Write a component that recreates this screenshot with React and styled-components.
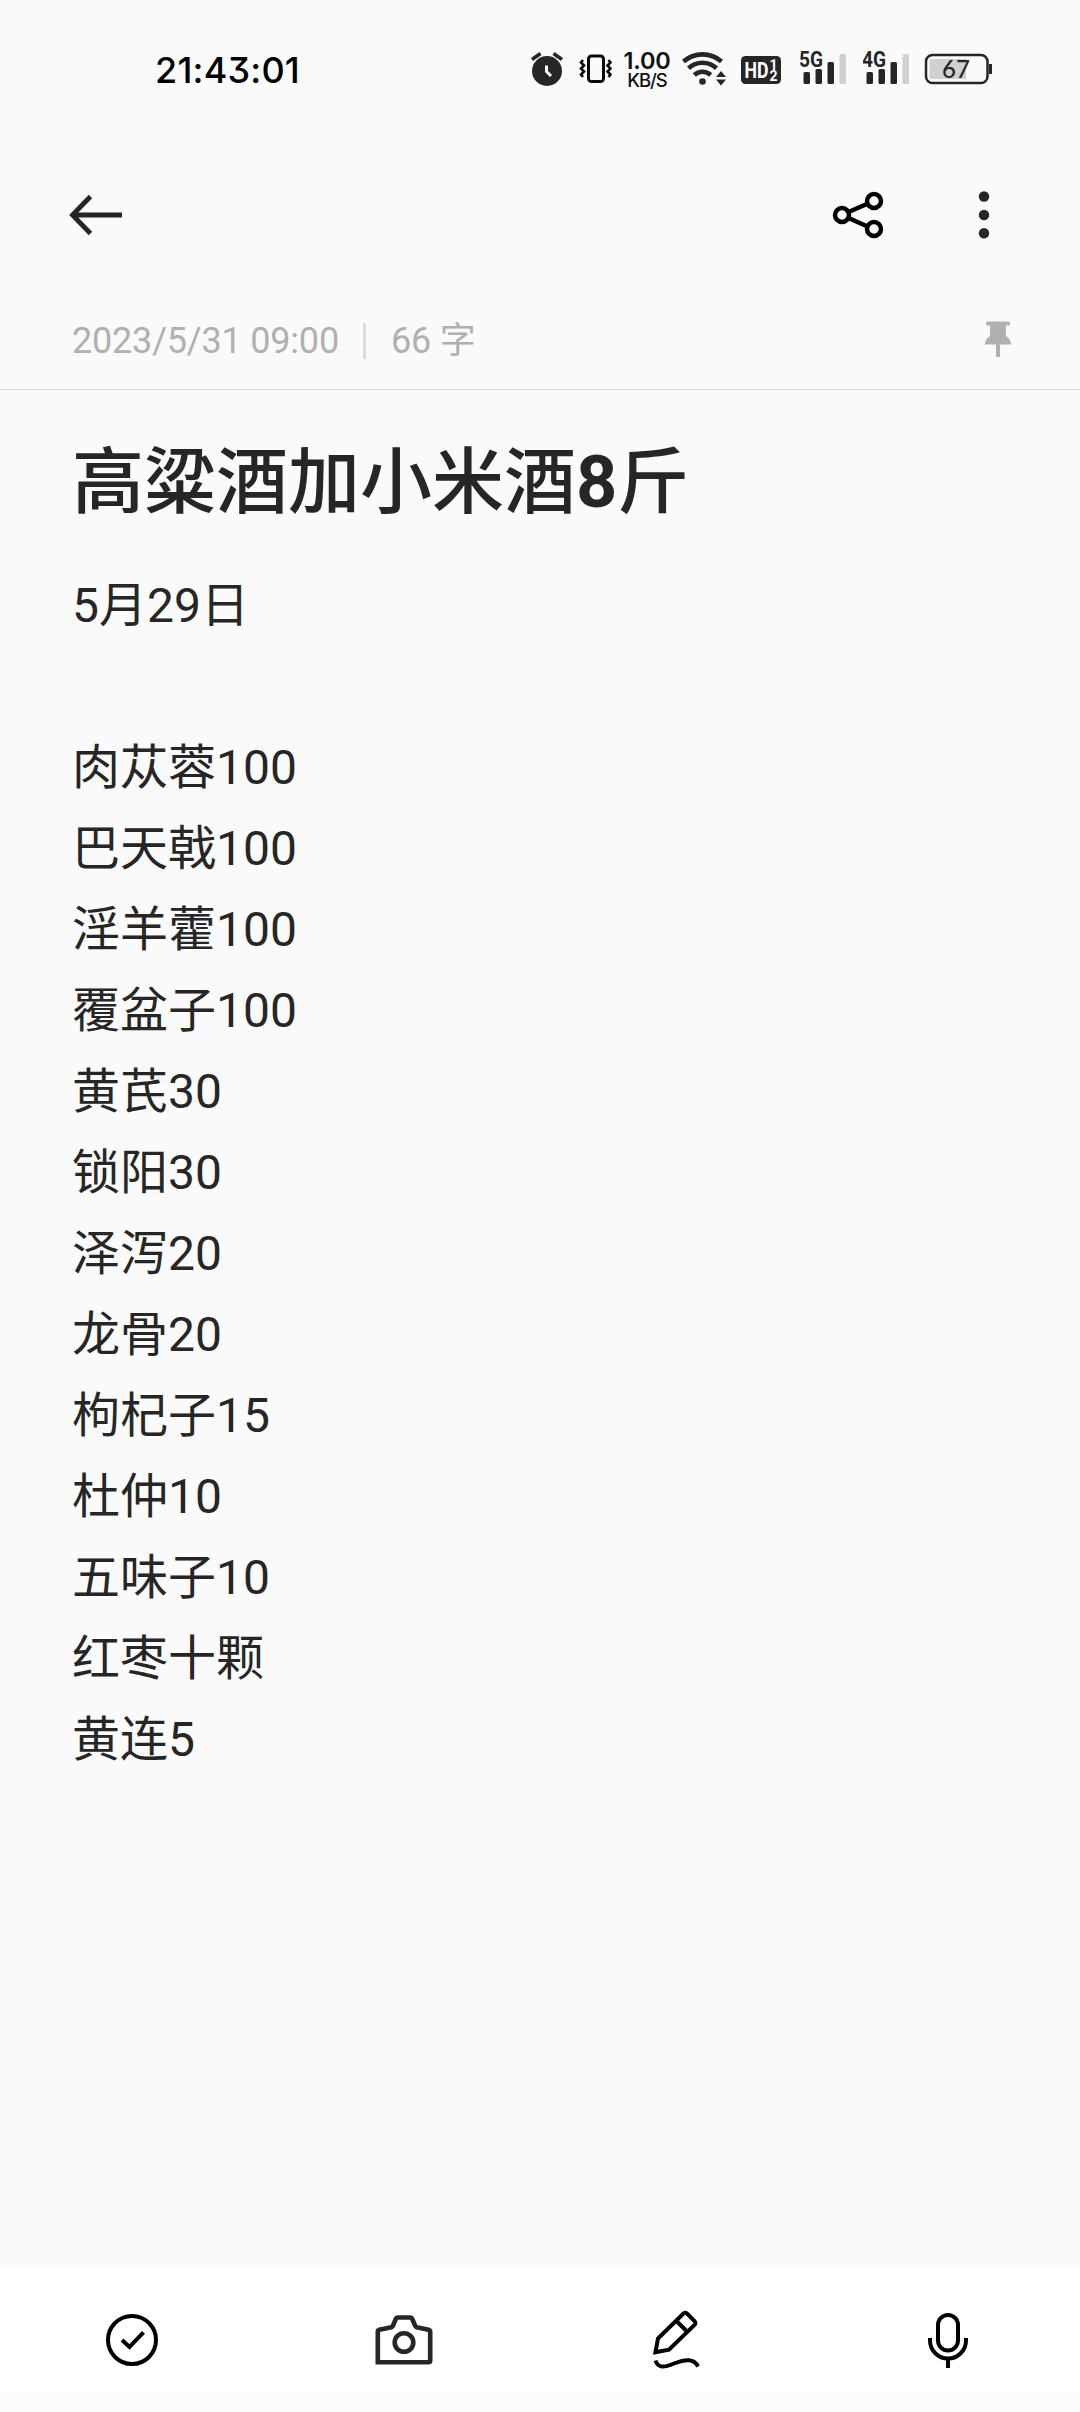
import React from "react";
import styled, { createGlobalStyle } from "styled-components";

const GlobalStyle = createGlobalStyle`
  * { box-sizing: border-box; }
  body { margin: 0; background: #fafafa; }
`;

const Screen = styled.div`
  display: flex;
  flex-direction: column;
  width: 1080px;
  height: 2412px;
  background: #fafafa;
  color: #262626;
  font-family: Roboto, "Noto Sans CJK SC", sans-serif;
  overflow: hidden;
`;

const StatusBar = styled.header`
  display: flex;
  align-items: center;
  height: 136px;
  padding: 0 88px 0 155px;
  justify-content: space-between;
`;

const Clock = styled.time`
  padding-top: 4px;
  font: 500 36px/40px Inter, sans-serif;
  font-feature-settings: "cv09";
  letter-spacing: 0.2px;
  color: #000;
`;

const StatusIcons = styled.div`
  display: flex;
  align-items: center;
  height: 40px;
`;

const Drawing = styled.svg`
  display: block;
  flex: none;
  margin-left: ${(p) => p.$gap || 0}px;
`;

const Speed = styled.div`
  display: flex;
  flex-direction: column;
  align-items: center;
  width: 48px;
  margin-left: 11px;
  padding-top: 4px;
  font-family: Inter, sans-serif;
  color: #111;
  white-space: nowrap;
`;

const SpeedValue = styled.span`
  font-size: 23.5px;
  font-weight: 600;
  line-height: 20px;
  letter-spacing: -0.2px;
`;

const SpeedUnit = styled.span`
  font-size: 18.5px;
  font-weight: 500;
  line-height: 18px;
  letter-spacing: -1px;
`;

const Toolbar = styled.nav`
  display: flex;
  align-items: center;
  justify-content: space-between;
  height: 158px;
  padding: 0 88px 0 68px;
`;

const ToolbarActions = styled.div`
  display: flex;
  align-items: center;
  gap: 92px;
`;

const IconButton = styled.button`
  display: flex;
  justify-content: center;
  padding: 0;
  border: 0;
  background: none;
`;

const MetaRow = styled.div`
  display: flex;
  align-items: center;
  height: 96px;
  padding: 0 67px 2px 72px;
  border-bottom: 1px solid #d9d9d9;
  color: #b0b0b0;
  font-size: 36px;
  line-height: 48px;
  letter-spacing: -0.2px;
`;

const MetaDivider = styled.span`
  width: 3px;
  height: 36px;
  margin: 0 24.5px;
  background: #dcdcdc;
`;

const PinSlot = styled.span`
  display: flex;
  margin-left: auto;
  padding-bottom: 2px;
`;

const Note = styled.main`
  flex: 1;
  padding: 45px 72px 0;
`;

const Title = styled.h1`
  margin: 0;
  font-size: 72px;
  font-weight: 500;
  line-height: 96px;
`;

const TitleNumber = styled.span`
  font-weight: 700;
`;

const Line = styled.p`
  margin: 0;
  height: 81px;
  font-size: 48px;
  line-height: 81px;
`;

const Lines = styled.section`
  padding-top: 34px;
`;

const BottomBar = styled.footer`
  display: grid;
  grid-template-columns: repeat(4, 272px);
  align-items: center;
  justify-content: center;
  height: 145px;
  padding-top: 21px;
  border-bottom: 20px solid #fcfcfc;
  background: #fff;
`;

const LINES = [
  "5月29日",
  "",
  "肉苁蓉100",
  "巴天戟100",
  "淫羊藿100",
  "覆盆子100",
  "黄芪30",
  "锁阳30",
  "泽泻20",
  "龙骨20",
  "枸杞子15",
  "杜仲10",
  "五味子10",
  "红枣十颗",
  "黄连5",
];

const AlarmIcon = () => (
  <Drawing width="34" height="40" viewBox="530 48 34 40">
    <circle cx="547" cy="71" r="15" fill="#262626" />
    <path d="M532 59.5L540.5 53.5M562 59.5L553.5 53.5" stroke="#262626" strokeWidth="3.6" />
    <path d="M546.5 65.5V71.5L551 76" fill="none" stroke="#fafafa" strokeWidth="3" />
  </Drawing>
);

const VibrateIcon = () => (
  <Drawing $gap={15} width="33" height="40" viewBox="579 48 33 40" fill="none" stroke="#0a0a0a">
    <rect x="588.5" y="56" width="15" height="25.5" rx="3" strokeWidth="3" />
    <path d="M583 60l-2 2.5 3 3-3 3 3 3-3 3 2 2.5M608.5 60l2 2.5-3 3 3 3-3 3 3 3-2 2.5" strokeWidth="2.6" />
  </Drawing>
);

const WifiIcon = () => (
  <Drawing $gap={10} width="46" height="40" viewBox="681 48 46 40">
    <g fill="none" stroke="#262626" strokeWidth="4.6">
      <path d="M683.5 61.5A29 29 0 0 1 721.5 61.5" />
      <path d="M688.5 68.3A20.5 20.5 0 0 1 716.5 68.3" />
      <path d="M694.3 75A12 12 0 0 1 710.7 75" />
    </g>
    <circle cx="702.5" cy="81.5" r="3.3" fill="#262626" />
    <path d="M721 71l5 6h-10zM721 85.5l5-6h-10z" fill="#262626" />
  </Drawing>
);

const HdIcon = () => (
  <Drawing
    $gap={14}
    width="40"
    height="40"
    viewBox="741 48 40 40"
    fontFamily="Roboto, sans-serif"
    fontWeight="700"
  >
    <rect x="741" y="56" width="40" height="28" rx="4.5" fill="#262626" />
    <text x="744.5" y="78" fontSize="22" textLength="24" lengthAdjust="spacingAndGlyphs" fill="#fff">
      HD
    </text>
    <text x="769.5" y="69.5" fontSize="14" fill="#fff">
      1
    </text>
    <text x="769.5" y="81" fontSize="14" fill="#fff">
      2
    </text>
  </Drawing>
);

const SignalIcon = ({ label, gap }) => (
  <Drawing $gap={gap} width="47" height="40" viewBox="800 48 47 40">
    <text
      x="799"
      y="67"
      fontFamily="Roboto, sans-serif"
      fontSize="21.5"
      fontWeight="700"
      textLength="24"
      lengthAdjust="spacingAndGlyphs"
      fill="#262626"
    >
      {label}
    </text>
    <g fill="#262626">
      <rect x="803.5" y="72" width="6.5" height="12" rx="1.5" />
      <rect x="815.5" y="69" width="6.5" height="15" rx="1.5" />
      <rect x="827.5" y="62" width="6.5" height="22" rx="1.5" />
    </g>
    <rect x="839.5" y="54" width="6.5" height="30" rx="1.5" fill="#d0d0d0" />
  </Drawing>
);

const BatteryIcon = () => (
  <Drawing $gap={14} width="68" height="40" viewBox="924 48 68 40">
    <rect x="926" y="55" width="61.5" height="28" rx="6.5" fill="none" stroke="#262626" strokeWidth="2.5" />
    <path d="M932 59h34v20h-34a2.5 2.5 0 0 1-2.5-2.5v-15a2.5 2.5 0 0 1 2.5-2.5z" fill="#d0d0d0" />
    <path d="M990.5 64v10" stroke="#262626" strokeWidth="3" />
    <text x="956" y="77.5" textAnchor="middle" fontFamily="Lato, sans-serif" fontSize="24" fontWeight="500" fill="#262626">
      67
    </text>
  </Drawing>
);

const BackIcon = () => (
  <Drawing width="56" height="44" viewBox="68 193 56 44" fill="none" stroke="#262626" strokeWidth="4.8">
    <path d="M122 215H73M90.5 196.5L72.5 215L90.5 233.5" />
  </Drawing>
);

const ShareIcon = () => (
  <Drawing width="52" height="48" viewBox="832 191 52 48" fill="none" stroke="#000" strokeWidth="4.5">
    <circle cx="842" cy="215" r="7" />
    <circle cx="874" cy="201" r="7" />
    <circle cx="874" cy="229" r="7" />
    <path d="M848.5 212L867.5 203.7M848.5 218L867.5 226.5" />
  </Drawing>
);

const MoreIcon = () => (
  <Drawing width="16" height="50" viewBox="976 190 16 50" fill="#262626">
    <circle cx="984" cy="196.5" r="5.2" />
    <circle cx="984" cy="215" r="5.2" />
    <circle cx="984" cy="233.3" r="5.2" />
  </Drawing>
);

const PinIcon = () => (
  <Drawing width="30" height="40" viewBox="983 320 30 40" fill="#b0b0b0">
    <path d="M987.5 321.5h21a1.5 1.5 0 0 1 1.5 1.5v1a1.5 1.5 0 0 1-1.5 1.5h-2.5V336c2.5 1.5 5 4.5 5 8.5h-26c0-4 2.5-7 5-8.5V325.5h-2.5a1.5 1.5 0 0 1-1.5-1.5v-1a1.5 1.5 0 0 1 1.5-1.5zM996 344h4v13h-4z" />
  </Drawing>
);

const CheckIcon = () => (
  <Drawing width="56" height="60" viewBox="104 2310 56 60" fill="none" stroke="#000" strokeWidth="4">
    <circle cx="132" cy="2340" r="24" />
    <path d="M122 2340L129.5 2347L143.5 2332.3" />
  </Drawing>
);

const CameraIcon = () => (
  <Drawing width="60" height="60" viewBox="374 2310 60 60" fill="none" stroke="#262626" strokeWidth="4.6">
    <path d="M377.8 2362.3V2331.5Q377.8 2330.3 379.3 2329.8L391.3 2327.3Q392.3 2327 392.8 2326L396 2318.5Q396.6 2317.5 398 2317.5H410Q411.5 2317.5 412 2318.5L415.3 2326Q415.8 2327 416.8 2327.3L428.5 2329.8Q430.2 2330.3 430.2 2331.8V2360.5Q430.2 2362.3 428.5 2362.3Z" />
    <circle cx="404" cy="2342.5" r="9.3" />
  </Drawing>
);

const PenIcon = () => (
  <Drawing width="52" height="62" viewBox="650 2309 52 62" fill="none" stroke="#000" strokeWidth="4">
    <path d="M655.5 2352.2L658 2338.5L683.5 2313.5Q685.2 2312 687 2313.5L694.5 2321Q696.2 2323 694.5 2325L669 2349.7Z" />
    <path d="M677 2321.5L686 2330.5" />
    <path d="M655.5 2360.5C658 2368.5 664 2367.5 674 2363.5C686 2359 694 2358.5 698 2366.5" />
  </Drawing>
);

const MicIcon = () => (
  <Drawing width="48" height="60" viewBox="924 2310 48 60" fill="none" stroke="#000" strokeWidth="4">
    <rect x="938" y="2315" width="20" height="35.5" rx="10" />
    <path d="M930 2338V2340.5A18 18 0 0 0 966 2340.5V2338M948 2358.5V2368" />
  </Drawing>
);

export default function App() {
  return (
    <Screen>
      <GlobalStyle />
      <StatusBar>
        <Clock>21:43:01</Clock>
        <StatusIcons>
          <AlarmIcon />
          <VibrateIcon />
          <Speed>
            <SpeedValue>1.00</SpeedValue>
            <SpeedUnit>KB/S</SpeedUnit>
          </Speed>
          <WifiIcon />
          <HdIcon />
          <SignalIcon label="5G" gap={19} />
          <SignalIcon label="4G" gap={16} />
          <BatteryIcon />
        </StatusIcons>
      </StatusBar>
      <Toolbar>
        <IconButton aria-label="返回">
          <BackIcon />
        </IconButton>
        <ToolbarActions>
          <IconButton aria-label="分享">
            <ShareIcon />
          </IconButton>
          <IconButton aria-label="更多">
            <MoreIcon />
          </IconButton>
        </ToolbarActions>
      </Toolbar>
      <MetaRow>
        <time>2023/5/31 09:00</time>
        <MetaDivider />
        <span>66 字</span>
        <PinSlot>
          <PinIcon />
        </PinSlot>
      </MetaRow>
      <Note>
        <Title>
          高粱酒加小米酒<TitleNumber>8</TitleNumber>斤
        </Title>
        <Lines>
          {LINES.map((text, i) => (
            <Line key={i}>{text}</Line>
          ))}
        </Lines>
      </Note>
      <BottomBar>
        <IconButton aria-label="待办">
          <CheckIcon />
        </IconButton>
        <IconButton aria-label="相机">
          <CameraIcon />
        </IconButton>
        <IconButton aria-label="手写">
          <PenIcon />
        </IconButton>
        <IconButton aria-label="录音">
          <MicIcon />
        </IconButton>
      </BottomBar>
    </Screen>
  );
}
